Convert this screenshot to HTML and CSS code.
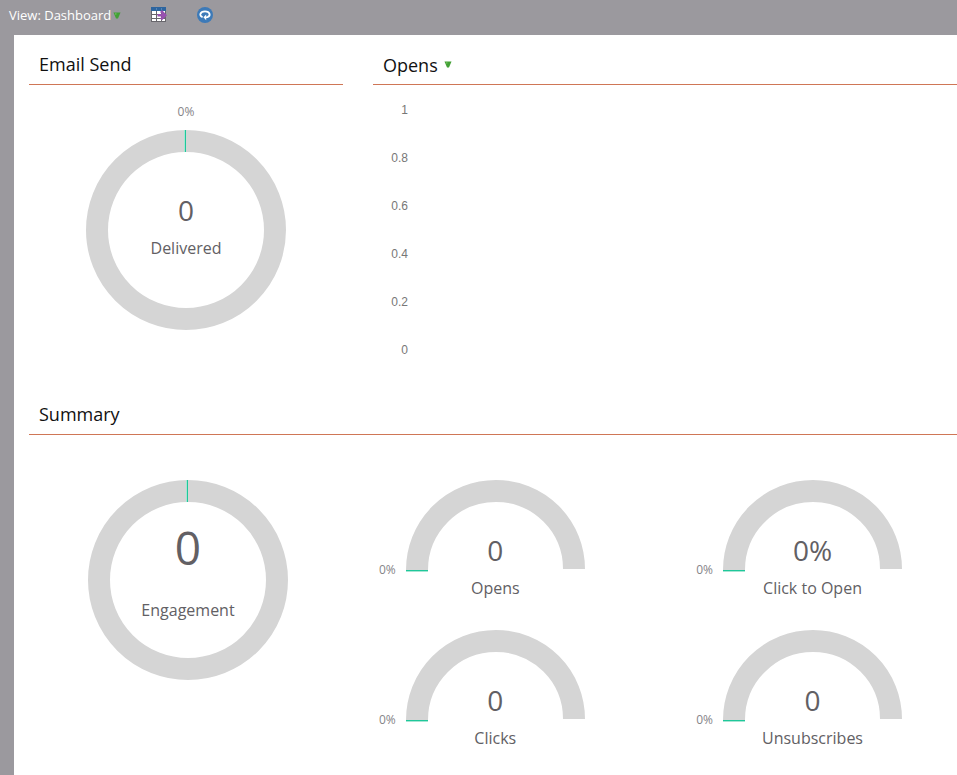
FILE: index.html
```
<!DOCTYPE html>
<html lang="en">
<head>
  <meta charset="UTF-8">
  <meta name="viewport" content="width=device-width, initial-scale=1.0">
  <title>Email Dashboard</title>
  <link rel="stylesheet" href="styles.css">
</head>
<body>

  <header class="toolbar">
    <button class="view-menu" type="button">View: Dashboard
      <svg class="caret" width="8" height="7" viewBox="0 0 8 7"><path d="M0.5 0.5H7.5L5 6.5H3Z" fill="#43a035"/><path d="M2 1.5H3.5L3 3Z" fill="#8fdc74"/></svg>
    </button>
    <button class="icon-button export" type="button" aria-label="Export">
      <svg width="16" height="16" viewBox="0 0 16 16">
        <path fill="#68666c" d="M0 0H15V15H0Z"/>
        <path fill="#2e659f" d="M0 0H15V4H0Z"/>
        <path fill="#5687b8" d="M5 1h1v2H5zM10 1h1v2h-1z"/>
        <path fill="#fff" d="M1 4h4v3H1zM6 4h4v3H6zM11 4h3v3h-3zM1 8h4v3H1zM6 8h4v3H6zM1 12h4v2H1zM6 12h4v2H6zM11 12h3v2h-3z"/>
        <path fill="#9850b0" d="M6.5 7H11L9 5L11 3L16 8.2L11 13.2L9 11.5L11 9.6H6.5Z"/>
      </svg>
    </button>
    <button class="icon-button" type="button" aria-label="Refresh">
      <svg width="16" height="16" viewBox="0 0 16 16">
        <circle cx="8" cy="8" r="8" fill="#3d7ab8"/>
        <path d="M5.6 10.2C1.8 9 2.8 4.4 8 4.4S14 9 10.4 10.2L8.5 10.3" fill="none" stroke="#fff" stroke-width="1.8"/>
        <path d="M9.2 7.4V13.2L6.4 10.3Z" fill="#fff"/>
      </svg>
    </button>
  </header>

  <main class="dashboard">
    <div class="top-row">
      <section class="send">
        <h2 class="title">Email Send</h2>
        <div class="send-body">
          <span class="percent">0%</span>
          <div class="donut">
            <svg width="200" height="200" viewBox="0 0 200 200">
              <circle class="track" cx="100" cy="100" r="89"/>
              <path class="mark-edge" d="M98.5 0V22"/>
              <path class="mark" d="M99.5 0V22"/>
            </svg>
            <div class="donut-text">
              <span class="value">0</span>
              <span class="label">Delivered</span>
            </div>
          </div>
        </div>
      </section>

      <section class="opens">
        <h2 class="title">
          <button class="title-menu" type="button">Opens
            <svg class="caret" width="8" height="7" viewBox="0 0 8 7"><path d="M0.5 0.5H7.5L5 6.5H3Z" fill="#43a035"/><path d="M2 1.5H3.5L3 3Z" fill="#8fdc74"/></svg>
          </button>
        </h2>
        <ul class="axis">
          <li>1</li>
          <li>0.8</li>
          <li>0.6</li>
          <li>0.4</li>
          <li>0.2</li>
          <li>0</li>
        </ul>
      </section>
    </div>

    <section class="summary">
      <h2 class="title">Summary</h2>
      <div class="summary-body">
        <div class="engagement">
          <div class="donut">
            <svg width="200" height="200" viewBox="0 0 200 200">
              <circle class="track" cx="100" cy="100" r="89"/>
              <path class="mark-edge" d="M98.5 0V22"/>
              <path class="mark" d="M99.5 0V22"/>
            </svg>
            <div class="donut-text large">
              <span class="value">0</span>
              <span class="label">Engagement</span>
            </div>
          </div>
        </div>

        <div class="gauges">
          <div class="gauge">
            <span class="percent">0%</span>
            <div class="dial">
              <svg width="181" height="92" viewBox="0 0 181 92">
                <path class="track" d="M12 90A79 79 0 0 1 91 11A78 78 0 0 1 169 89"/>
                <path class="mark" d="M1 90.5H23"/>
                <path class="mark-edge" d="M1 91.5H23"/>
              </svg>
              <span class="value">0</span>
              <span class="label">Opens</span>
            </div>
          </div>
          <div class="gauge">
            <span class="percent">0%</span>
            <div class="dial">
              <svg width="181" height="92" viewBox="0 0 181 92">
                <path class="track" d="M12 90A79 79 0 0 1 91 11A78 78 0 0 1 169 89"/>
                <path class="mark" d="M1 90.5H23"/>
                <path class="mark-edge" d="M1 91.5H23"/>
              </svg>
              <span class="value">0%</span>
              <span class="label">Click to Open</span>
            </div>
          </div>
          <div class="gauge">
            <span class="percent">0%</span>
            <div class="dial">
              <svg width="181" height="92" viewBox="0 0 181 92">
                <path class="track" d="M12 90A79 79 0 0 1 91 11A78 78 0 0 1 169 89"/>
                <path class="mark" d="M1 90.5H23"/>
                <path class="mark-edge" d="M1 91.5H23"/>
              </svg>
              <span class="value">0</span>
              <span class="label">Clicks</span>
            </div>
          </div>
          <div class="gauge">
            <span class="percent">0%</span>
            <div class="dial">
              <svg width="181" height="92" viewBox="0 0 181 92">
                <path class="track" d="M12 90A79 79 0 0 1 91 11A78 78 0 0 1 169 89"/>
                <path class="mark" d="M1 90.5H23"/>
                <path class="mark-edge" d="M1 91.5H23"/>
              </svg>
              <span class="value">0</span>
              <span class="label">Unsubscribes</span>
            </div>
          </div>
        </div>
      </div>
    </section>
  </main>

</body>
</html>
```
FILE: styles.css
```
* {
  box-sizing: border-box;
}

body {
  margin: 0;
  background: #9b999e;
  color: #626064;
  font-family: "Open Sans", Arial, sans-serif;
}

button {
  margin: 0;
  padding: 0;
  border: 0;
  background: none;
  color: inherit;
  font: inherit;
  cursor: pointer;
}

svg {
  display: block;
}

/* Toolbar */
.toolbar {
  display: flex;
  align-items: center;
  height: 35px;
  padding: 0 9px 5px;
  gap: 30px;
}

.view-menu,
.title-menu {
  display: flex;
  align-items: center;
  gap: 2px;
}

.view-menu {
  color: #fff;
  font-size: 13px;
}

.title-menu {
  gap: 6px;
  padding-top: 2px;
}

/* Panels */
.dashboard {
  min-height: calc(100vh - 35px);
  margin-left: 14px;
  padding-left: 15px;
  background: #fff;
}

.top-row {
  display: flex;
  gap: 30px;
  min-height: 350px;
}

.send {
  width: 314px;
}

.opens {
  flex: 1;
}

.title {
  display: flex;
  align-items: center;
  height: 50px;
  margin: 0;
  padding: 8px 10px 0;
  border-bottom: 1px solid #cf7656;
  color: #111;
  font-size: 18px;
  font-weight: 400;
}

.send-body {
  display: flex;
  flex-direction: column;
  align-items: center;
  padding-top: 18px;
}

.percent {
  font-size: 12px;
  line-height: 18px;
  color: #868488;
}

.send .percent {
  margin-bottom: 9px;
}

.axis {
  width: 35px;
  margin: 0;
  padding: 1px 0 0;
  list-style: none;
  color: #777;
  font-family: "Liberation Sans", Arial, sans-serif;
  font-size: 12px;
  line-height: 48px;
  text-align: right;
}

/* Charts */
.track {
  fill: none;
  stroke: #d5d5d5;
  stroke-width: 22px;
}

.mark,
.mark-edge {
  fill: none;
  stroke: #1fc79a;
  stroke-width: 1px;
}

.mark-edge {
  stroke: #a5e6d3;
}

.donut {
  display: grid;
}

.donut > * {
  grid-area: 1 / 1;
}

.donut-text {
  display: flex;
  flex-direction: column;
  align-items: center;
  padding-top: 60px;
}

.value {
  font-size: 28px;
  line-height: 40px;
}

.label {
  font-size: 16px;
  line-height: 36px;
}

.large {
  padding-top: 37px;
}

.large .value {
  font-size: 46px;
  line-height: 60px;
  margin-bottom: 15px;
}

/* Summary */
.summary-body {
  display: flex;
  padding-top: 45px;
}

.engagement {
  display: flex;
  justify-content: center;
  width: 318px;
}

.engagement .donut {
  height: 200px;
}

.gauges {
  flex: 1;
  display: grid;
  grid-template-columns: auto auto;
  justify-content: space-between;
  row-gap: 27px;
  padding: 0 54px 0 32px;
}

.gauge {
  display: flex;
  gap: 9px;
}

.gauge .percent {
  margin-top: 81px;
}

.dial {
  display: flex;
  flex-direction: column;
  align-items: center;
}

.dial .value {
  margin-top: -42px;
}

.dial .label {
  margin-bottom: -3px;
}
```
